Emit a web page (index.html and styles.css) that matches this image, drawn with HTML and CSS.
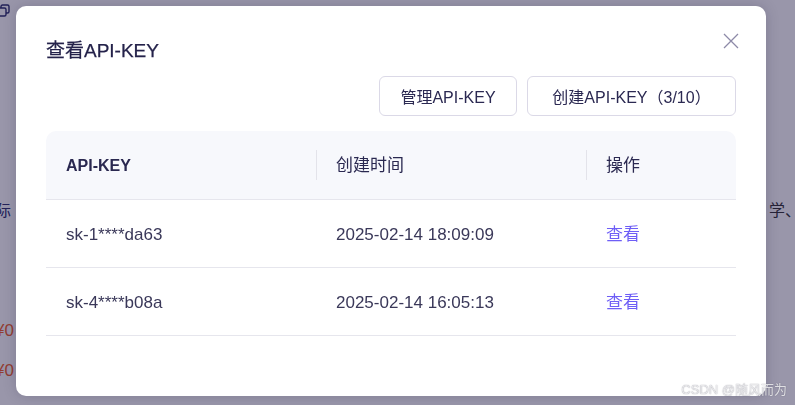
FILE: index.html
```html
<!DOCTYPE html>
<html lang="zh-CN">
<head>
<meta charset="utf-8">
<title>查看API-KEY</title>
<link rel="stylesheet" href="styles.css">
</head>
<body>
<div class="page">
  <div class="page-top">
    <svg class="copy-icon" width="14" height="14" viewBox="0 0 14 14"><rect x="1" y="4" width="8" height="8" rx="1.5" fill="none" stroke="currentColor" stroke-width="1.4"/><path d="M4 4V2.5A1.5 1.5 0 0 1 5.5 1h5A1.5 1.5 0 0 1 12 2.5v5A1.5 1.5 0 0 1 10.5 9H9" fill="none" stroke="currentColor" stroke-width="1.4"/></svg>
  </div>
  <div class="page-row">
    <span class="frag-left">际</span>
    <span class="frag-right">学、个</span>
  </div>
  <div class="price">¥0</div>
  <div class="price price-2">¥0</div>
</div>

<div class="overlay">
  <div class="modal">
    <h2 class="modal-title">查看API-KEY</h2>
    <button class="close-btn" aria-label="关闭">
      <svg width="16" height="16" viewBox="0 0 16 16"><path d="M1 1L15 15M15 1L1 15" stroke="currentColor" stroke-width="1.3" fill="none"/></svg>
    </button>
    <div class="actions">
      <button class="btn btn-manage">管理API-KEY</button>
      <button class="btn btn-create">创建API-KEY（3/10）</button>
    </div>
    <div class="table">
      <div class="thead">
        <div class="th th-first">API-KEY</div>
        <div class="th th-sep">创建时间</div>
        <div class="th th-sep">操作</div>
      </div>
      <div class="tr">
        <div class="td">sk-1****da63</div>
        <div class="td">2025-02-14 18:09:09</div>
        <div class="td"><a class="link">查看</a></div>
      </div>
      <div class="tr">
        <div class="td">sk-4****b08a</div>
        <div class="td">2025-02-14 16:05:13</div>
        <div class="td"><a class="link">查看</a></div>
      </div>
    </div>
  </div>
  <div class="watermark">CSDN @随风而为</div>
</div>
</body>
</html>
```

FILE: styles.css
```css
* { box-sizing: border-box; }

html, body {
  margin: 0;
  padding: 0;
  width: 795px;
  height: 405px;
  overflow: hidden;
  font-family: "Liberation Sans", "Noto Sans CJK SC", sans-serif;
  background: #ffffff;
}

/* underlying page (dimmed by overlay) */
.page {
  display: flex;
  flex-direction: column;
  height: 405px;
  color: #2d3170;
}
.page-top {
  padding: 4px 0 0 0;
  height: 20px;
  margin-left: -3px;
}
.copy-icon { color: #2b2f6e; display: block; }
.page-row {
  display: flex;
  justify-content: space-between;
  margin-top: 181px;
  font-size: 16px;
  line-height: 20px;
}
.frag-left { margin-left: -5px; }
.frag-right { margin-right: -22px; color: #333; }
.price {
  margin-top: 100px;
  margin-left: -5px;
  color: #f2622a;
  font-size: 17px;
  line-height: 20px;
}
.price-2 { margin-top: 20px; }

.overlay {
  position: fixed;
  inset: 0;
  background: rgba(23, 16, 62, 0.44);
  padding: 6px 29px 9px 16px;
}

.modal {
  position: relative;
  width: 750px;
  height: 390px;
  background: #fff;
  border-radius: 10px;
  padding: 32px 30px 0;
  box-shadow: 0 0 14px rgba(10, 5, 40, 0.18);
}

.modal-title {
  margin: 0;
  font-size: 19px;
  line-height: 26px;
  font-weight: 400;
  color: #24224a;
  -webkit-text-stroke: 0.25px #24224a;
}

.close-btn {
  position: absolute;
  top: 27px;
  right: 27px;
  width: 16px;
  height: 16px;
  padding: 0;
  border: 0;
  background: none;
  color: #8d8aa8;
  display: flex;
}

.actions {
  display: flex;
  justify-content: flex-end;
  gap: 10px;
  margin-top: 12px;
}

.btn {
  height: 40px;
  border: 1px solid #dbd9e7;
  border-radius: 6px;
  background: #fff;
  font-family: inherit;
  font-size: 16px;
  color: #2b2952;
  padding: 0;
  text-align: center;
}
.btn-manage { width: 138px; }
.btn-create { width: 209px; }

.table {
  margin-top: 15px;
  border-radius: 10px 10px 0 0;
  overflow: hidden;
}

.thead, .tr {
  display: grid;
  grid-template-columns: 270px 270px 1fr;
  align-items: center;
  height: 68px;
  border-bottom: 1px solid #e6e6ed;
}

.thead {
  background: #f7f8fc;
  height: 69px;
}

.th {
  font-size: 17px;
  color: #2a2850;
  padding-left: 20px;
  line-height: 28px;
  padding-top: 2px;
}
.th-first { font-weight: 700; font-size: 16px; }
.th-sep {
  border-left: 1px solid #e3e3ea;
  padding-left: 19px;
}

.td {
  font-size: 17px;
  line-height: 24px;
  height: 24px;
  color: #3a3859;
  padding-left: 20px;
  margin-top: 3px;
  display: flex;
  align-items: center;
}

.link {
  color: #6e5ef6;
  font-size: 17px;
  line-height: 24px;
  display: block;
  cursor: pointer;
}

.watermark {
  position: absolute;
  right: 8px;
  bottom: 7px;
  font-size: 13px;
  color: rgba(255, 255, 255, 0.8);
  text-shadow: 0 0 1px rgba(60, 60, 80, 0.7);
}
```
